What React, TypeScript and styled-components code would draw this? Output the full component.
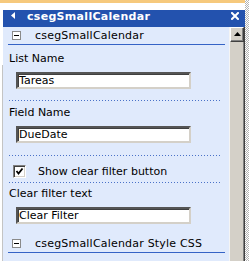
import React from 'react';
import styled, { createGlobalStyle } from 'styled-components';

const Global = createGlobalStyle`
  html, body { margin: 0; padding: 0; background: #fff; }
  body { font-family: "DejaVu Sans", Verdana, sans-serif; }
`;

const Frame = styled.div`
  width: 249px;
  height: 261px;
  overflow: hidden;
  display: flex;
  background: #fff;
`;

const Main = styled.div`
  width: 245px;
  display: flex;
  flex-direction: column;
`;

const Checker = styled.div`
  width: 4px;
  background-color: #fff;
  background-image: repeating-conic-gradient(#b4b4b4 0 25%, #ffffff 0 50%);
  background-size: 2px 2px;
`;

const TopStripe = styled.div`
  height: 3px;
  background: #f6c97c;
  margin-bottom: 7px;
`;

const Header = styled.div`
  margin-left: 3px;
  height: 17px;
  background: #2352ae;
  display: flex;
  align-items: flex-start;
  color: #fff;
  padding: 1px 6px 0 8px;
  box-sizing: border-box;
`;

const Title = styled.span`
  font: bold 11px/13px "DejaVu Sans", Verdana, sans-serif;
  letter-spacing: 0.3px;
  margin-left: 12px;
  margin-top: -1px;
  flex: 1;
  white-space: nowrap;
`;

const BodyRow = styled.div`
  flex: 1;
  display: flex;
  min-height: 0;
`;

const Gutter = styled.div`
  width: 3px;
  display: flex;
  flex-direction: column;
`;

const GutterLine = styled.div`
  flex: 1;
  margin-top: 38px;
  margin-left: 2px;
  border-left: 1px solid #c4c4c4;
`;

const Pane = styled.div`
  width: 226px;
  background: #e0eafc;
  padding: 0 4px 0 5px;
  box-sizing: border-box;
  color: #000;
  font: 11px/13px "DejaVu Sans", Verdana, sans-serif;
`;

const SectionHeader = styled.div`
  height: 17px;
  display: flex;
  align-items: center;
  border-bottom: 1px solid #3563c6;
`;

const MinusBox = styled.span`
  width: 9px;
  height: 9px;
  box-sizing: border-box;
  border: 1px solid #8a8a8a;
  background: #fff;
  margin-left: 4px;
  display: flex;
  align-items: center;
  justify-content: center;
  &::before {
    content: '';
    width: 5px;
    height: 1px;
    background: #000;
  }
`;

const SectionTitle = styled.span`
  margin-left: 14px;
  white-space: nowrap;
  letter-spacing: 0.2px;
`;

const dotted = `
  &::after {
    content: '';
    position: absolute;
    left: 1px;
    right: 3px;
    bottom: 0;
    height: 1px;
    background-image: linear-gradient(to right, #4a72c8 1px, transparent 1px);
    background-size: 3px 1px;
  }
`;

const Group = styled.div<{ $top: number; $bottom: number; $sep?: boolean }>`
  padding: ${(p) => p.$top}px 0 ${(p) => p.$bottom}px;
  position: relative;
  ${(p) => (p.$sep ? dotted : '')}
`;

const Label = styled.div`
  padding-left: 1px;
  margin-bottom: 7px;
  white-space: nowrap;
`;

const TextBox = styled.div`
  margin-left: 8px;
  width: 175px;
  height: 17px;
  box-sizing: border-box;
  background: #fff;
  border-style: solid;
  border-width: 2px;
  border-color: #555 #d4d0c8 #d4d0c8 #555;
  box-shadow: inset 1px 1px 0 #404040;
  padding-left: 1px;
  white-space: nowrap;
  overflow: hidden;
  line-height: 13px;
`;

const CheckRow = styled.div`
  display: flex;
  align-items: center;
  padding: 9px 0 5px;
  position: relative;
  ${dotted}
`;

const CheckBox = styled.span`
  width: 13px;
  height: 13px;
  box-sizing: border-box;
  margin-left: 5px;
  background: #fff;
  border-style: solid;
  border-width: 1px;
  border-color: #808080 #fff #fff #808080;
  box-shadow: inset 1px 1px 0 #404040, inset -1px -1px 0 #d4d0c8;
  display: flex;
  align-items: center;
  justify-content: center;
`;

const CheckLabel = styled.span`
  margin-left: 12px;
  white-space: nowrap;
`;

const Scrollbar = styled.div`
  width: 16px;
  box-sizing: border-box;
  background: #d4d0c8;
  border-left: 1px solid #f4f4f4;
  border-right: 1px solid #404040;
  box-shadow: inset -1px 0 0 #808080;
  display: flex;
  flex-direction: column;
`;

const ScrollButton = styled.div`
  height: 15px;
  box-sizing: border-box;
  border: 1px solid;
  border-color: #fff #404040 #404040 #fff;
  box-shadow: inset -1px -1px 0 #808080;
  background: #d4d0c8;
  display: flex;
  align-items: center;
  justify-content: center;
  padding-bottom: 1px;
`;

const TriLeft = () => (
  <svg width="4" height="7" viewBox="0 0 4 7" style={{ marginTop: 1 }}>
    <path d="M4 0 L0 3.5 L4 7 Z" fill="#fff" />
  </svg>
);

const CloseIcon = () => (
  <svg width="8" height="8" viewBox="0 0 8 8" style={{ marginTop: 1 }}>
    <path d="M1 1 L7 7 M7 1 L1 7" stroke="#fff" strokeWidth="2" strokeLinecap="square" />
  </svg>
);

const Check = () => (
  <svg width="9" height="9" viewBox="0 0 9 9">
    <path d="M1.5 4 L3.5 6.5 L7.5 1.5" stroke="#000" strokeWidth="1.8" fill="none" />
  </svg>
);

const UpArrow = () => (
  <svg width="7" height="4" viewBox="0 0 7 4">
    <path d="M0 4 L3.5 0 L7 4 Z" fill="#000" />
  </svg>
);

export default function App() {
  return (
    <>
      <Global />
      <Frame>
        <Main>
          <TopStripe />
          <Header>
            <TriLeft />
            <Title>csegSmallCalendar</Title>
            <CloseIcon />
          </Header>
          <BodyRow>
            <Gutter>
              <GutterLine />
            </Gutter>
            <Pane>
              <SectionHeader>
                <MinusBox />
                <SectionTitle>csegSmallCalendar</SectionTitle>
              </SectionHeader>
              <Group $top={7} $bottom={12} $sep>
                <Label>List Name</Label>
                <TextBox>Tareas</TextBox>
              </Group>
              <Group $top={5} $bottom={13} $sep>
                <Label>Field Name</Label>
                <TextBox>DueDate</TextBox>
              </Group>
              <CheckRow>
                <CheckBox>
                  <Check />
                </CheckBox>
                <CheckLabel>Show clear filter button</CheckLabel>
              </CheckRow>
              <Group $top={4} $bottom={11}>
                <Label>Clear filter text</Label>
                <TextBox>Clear Filter</TextBox>
              </Group>
              <SectionHeader>
                <MinusBox />
                <SectionTitle>csegSmallCalendar Style CSS</SectionTitle>
              </SectionHeader>
            </Pane>
            <Scrollbar>
              <ScrollButton>
                <UpArrow />
              </ScrollButton>
            </Scrollbar>
          </BodyRow>
        </Main>
        <Checker />
      </Frame>
    </>
  );
}
